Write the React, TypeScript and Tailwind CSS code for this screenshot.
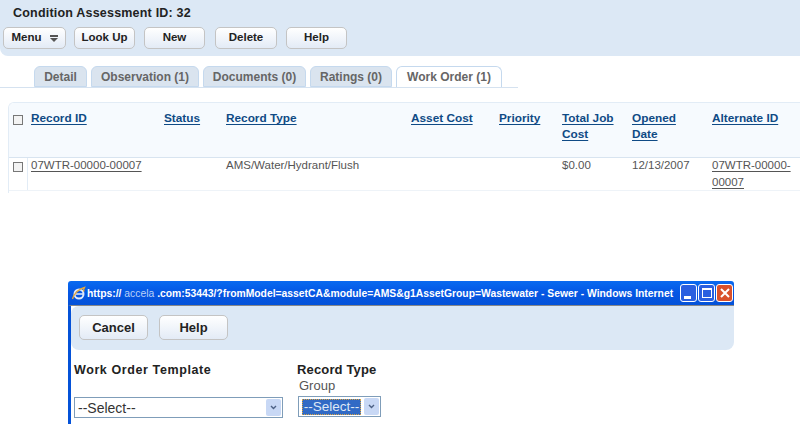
const font = "font-['Liberation_Sans',Arial,sans-serif]";

function Btn({ label, w, big }: { label: string; w: string; big?: boolean }) {
  return (
    <div
      className={`flex items-center justify-center gap-[8px] rounded-[5px] border border-[#c4c4c4] bg-gradient-to-b from-white to-[#e3ebf6] font-bold text-[#222] ${w} ${big ? 'h-[25px] text-[13px]' : 'h-[22px] text-[11.5px]'}`}
    >
      {label}
      {label === 'Menu' && (
        <svg width="8" height="7" viewBox="0 0 8 7" fill="#555">
          <path d="M0 0h8v2H0zM0 3h8L4 7z" />
        </svg>
      )}
    </div>
  );
}

function Tab({ label, w, active }: { label: string; w: string; active?: boolean }) {
  return (
    <div
      className={`flex h-[21px] items-center justify-center rounded-t-[6px] border border-[#c5d9ee] text-[12px] font-bold text-[#666] ${w} ${active ? 'border-b-0 bg-white' : 'bg-[#dae4ef]'}`}
    >
      {label}
    </div>
  );
}

function Check() {
  return <span className="block h-[10px] w-[10px] border border-[#777] bg-[#f3f3f3]" />;
}

function Head({ w, children }: { w: string; children: React.ReactNode }) {
  return (
    <div className={`${w} shrink-0 pt-[7px] text-[11.8px] font-bold leading-[16px] text-[#0f4a85]`}>
      <span className="underline underline-offset-2">{children}</span>
    </div>
  );
}

function Cell({ w, children }: { w: string; children?: React.ReactNode }) {
  return <div className={`${w} -mt-[1px] shrink-0 text-[11.5px] leading-[17px] text-[#555]`}>{children}</div>;
}

function Select({ w, label, selected }: { w: string; label: string; selected?: boolean }) {
  return (
    <div className={`flex items-center whitespace-nowrap border border-[#7f9db9] bg-white p-[1px] text-[14px] text-[#333] ${w} h-[21px]`}>
      {selected ? (
        <span className="ml-[2px] flex-1 border border-dotted border-[#d9a441] bg-[#316ac5] text-center text-[13.5px] leading-[14px] text-[#dfe8f5]">{label}</span>
      ) : (
        <span className="ml-[2px] flex-1 leading-[16px]">{label}</span>
      )}
      <span className="ml-[3px] flex h-[17px] w-[15px] shrink-0 items-center justify-center rounded-[2px] bg-[#c8d8f5]">
        <svg width="7" height="5" viewBox="0 0 7 5" fill="none" stroke="#4d6185" strokeWidth="1.4">
          <path d="M1 1l2.500 2.500L6 1" />
        </svg>
      </span>
    </div>
  );
}

export default function App() {
  return (
    <div className={`${font} h-[424px] w-[800px] overflow-hidden bg-white`}>
      <div className="h-[56px] rounded-bl-[8px] bg-[#dce8f5] pl-[3px] pt-[6px]">
        <div className="pl-[10px] text-[12.5px] font-bold leading-[15px] tracking-[0.2px] text-[#222]">Condition Assessment ID: 32</div>
        <div className="mt-[6px] flex">
          <Btn label="Menu" w="w-[63px]" />
          <div className="ml-[8px]"><Btn label="Look Up" w="w-[61px]" /></div>
          <div className="ml-[9px]"><Btn label="New" w="w-[61px]" /></div>
          <div className="ml-[10px]"><Btn label="Delete" w="w-[62px]" /></div>
          <div className="ml-[9px]"><Btn label="Help" w="w-[61px]" /></div>
        </div>
      </div>

      <div className="mt-[10px] flex h-[22px] w-[518px] gap-[4px] border-b border-[#d5e2f0] pl-[34px]">
        <Tab label="Detail" w="w-[53px]" />
        <Tab label="Observation (1)" w="w-[108px]" />
        <Tab label="Documents (0)" w="w-[103px]" />
        <Tab label="Ratings (0)" w="w-[82px]" />
        <Tab label="Work Order (1)" w="w-[106px]" active />
      </div>

      <div className="ml-[8px] mt-[14px] h-[91px] overflow-hidden rounded-tl-[6px] border-l border-t border-[#e2ecf6]">
        <div className="flex h-[55px] border-b border-[#d8e4f0] bg-[#f6fafe]">
          <div className="w-[4px] shrink-0" />
          <div className="w-[18px] shrink-0 pt-[12px]"><Check /></div>
          <Head w="w-[133px]">Record ID</Head>
          <Head w="w-[62px]">Status</Head>
          <Head w="w-[185px]">Record Type</Head>
          <Head w="w-[88px]">Asset Cost</Head>
          <Head w="w-[63px]">Priority</Head>
          <Head w="w-[70px]">Total Job Cost</Head>
          <Head w="w-[80px]">Opened<br />Date</Head>
          <Head w="w-[84px]">Alternate ID</Head>
        </div>
        <div className="flex h-[33px] border-b border-[#eef3f8]">
          <div className="w-[4px] shrink-0" />
          <div className="w-[14px] shrink-0 pt-[4px]"><Check /></div>
          <div className="mr-[3px] w-px shrink-0 bg-[#e2ecf6]" />
          <Cell w="w-[133px]"><span className="underline underline-offset-2">07WTR-00000-00007</span></Cell>
          <Cell w="w-[62px]" />
          <Cell w="w-[185px]">AMS/Water/Hydrant/Flush</Cell>
          <Cell w="w-[88px]" />
          <Cell w="w-[63px]" />
          <Cell w="w-[70px]">$0.00</Cell>
          <Cell w="w-[80px]">12/13/2007</Cell>
          <Cell w="w-[84px]"><span className="underline underline-offset-2">07WTR-00000-00007</span></Cell>
        </div>
      </div>

      <div className="ml-[68px] mt-[88px] h-[143px] w-[666px] overflow-hidden">
        <div className="flex h-[24px] items-center rounded-t-[3px] bg-gradient-to-b from-[#0a6af0] via-[#0556e4] to-[#0452d8] pl-[3px] pr-[1px]">
          <svg width="15" height="15" viewBox="0 0 15 15" fill="none">
            <circle cx="8" cy="8" r="4.500" stroke="#dfe9fb" strokeWidth="2" />
            <path d="M4 8h8" stroke="#dfe9fb" strokeWidth="1.500" />
            <path d="M1.500 13c1-5 6-10 12-11.500-1 1.500-1 3-.5 4" stroke="#e8a93a" strokeWidth="1.300" />
          </svg>
          <span className="ml-[1px] min-w-0 flex-1 overflow-hidden whitespace-nowrap text-[10.35px] font-bold leading-[15px] text-white">
            https:// <span className="font-normal text-[#b9d2f7]">accela</span> .com:53443/?fromModel=assetCA&amp;module=AMS&amp;g1AssetGroup=Wastewater - Sewer - Windows Internet
          </span>
          <div className="flex shrink-0 gap-[1px]">
            <span className="flex h-[18px] w-[17px] items-end rounded-[3px] border border-white bg-[#2a5fe0] pb-[2px] pl-[3px]"><span className="h-[3px] w-[7px] bg-white" /></span>
            <span className="flex h-[18px] w-[17px] items-center justify-center rounded-[3px] border border-white bg-[#2a5fe0]"><span className="h-[10px] w-[10px] border border-t-2 border-white" /></span>
            <span className="flex h-[18px] w-[17px] items-center justify-center rounded-[3px] border border-white bg-[#d9512c]">
              <svg width="10" height="10" viewBox="0 0 10 10" stroke="white" strokeWidth="2"><path d="M1 1l8 8M9 1l-8 8" /></svg>
            </span>
          </div>
        </div>
        <div className="h-[119px] border-l-[3px] border-t border-[#0452d8] border-t-[#888] bg-white">
          <div className="flex h-[44px] items-center gap-[11px] rounded-b-[8px] rounded-tl-[8px] bg-[#dce8f5] pb-[1px] pl-[8px]">
            <Btn label="Cancel" w="w-[69px]" big />
            <Btn label="Help" w="w-[69px]" big />
          </div>
          <div className="mt-[11px] flex pl-[3px]">
            <div className="w-[223px]">
              <div className="text-[12.5px] font-bold leading-[18px] tracking-[0.6px] text-[#222]">Work Order Template</div>
              <div className="mt-[18px]"><Select w="w-[209px]" label="--Select--" /></div>
            </div>
            <div>
              <div className="text-[13px] font-bold leading-[17px] tracking-[0.15px] text-[#222]">Record Type</div>
              <div className="pl-[2px] text-[13px] leading-[15px] text-[#555]">Group</div>
              <div className="ml-[1px] mt-[3px]"><Select w="w-[83px]" label="--Select--" selected /></div>
            </div>
          </div>
        </div>
      </div>
    </div>
  );
}
